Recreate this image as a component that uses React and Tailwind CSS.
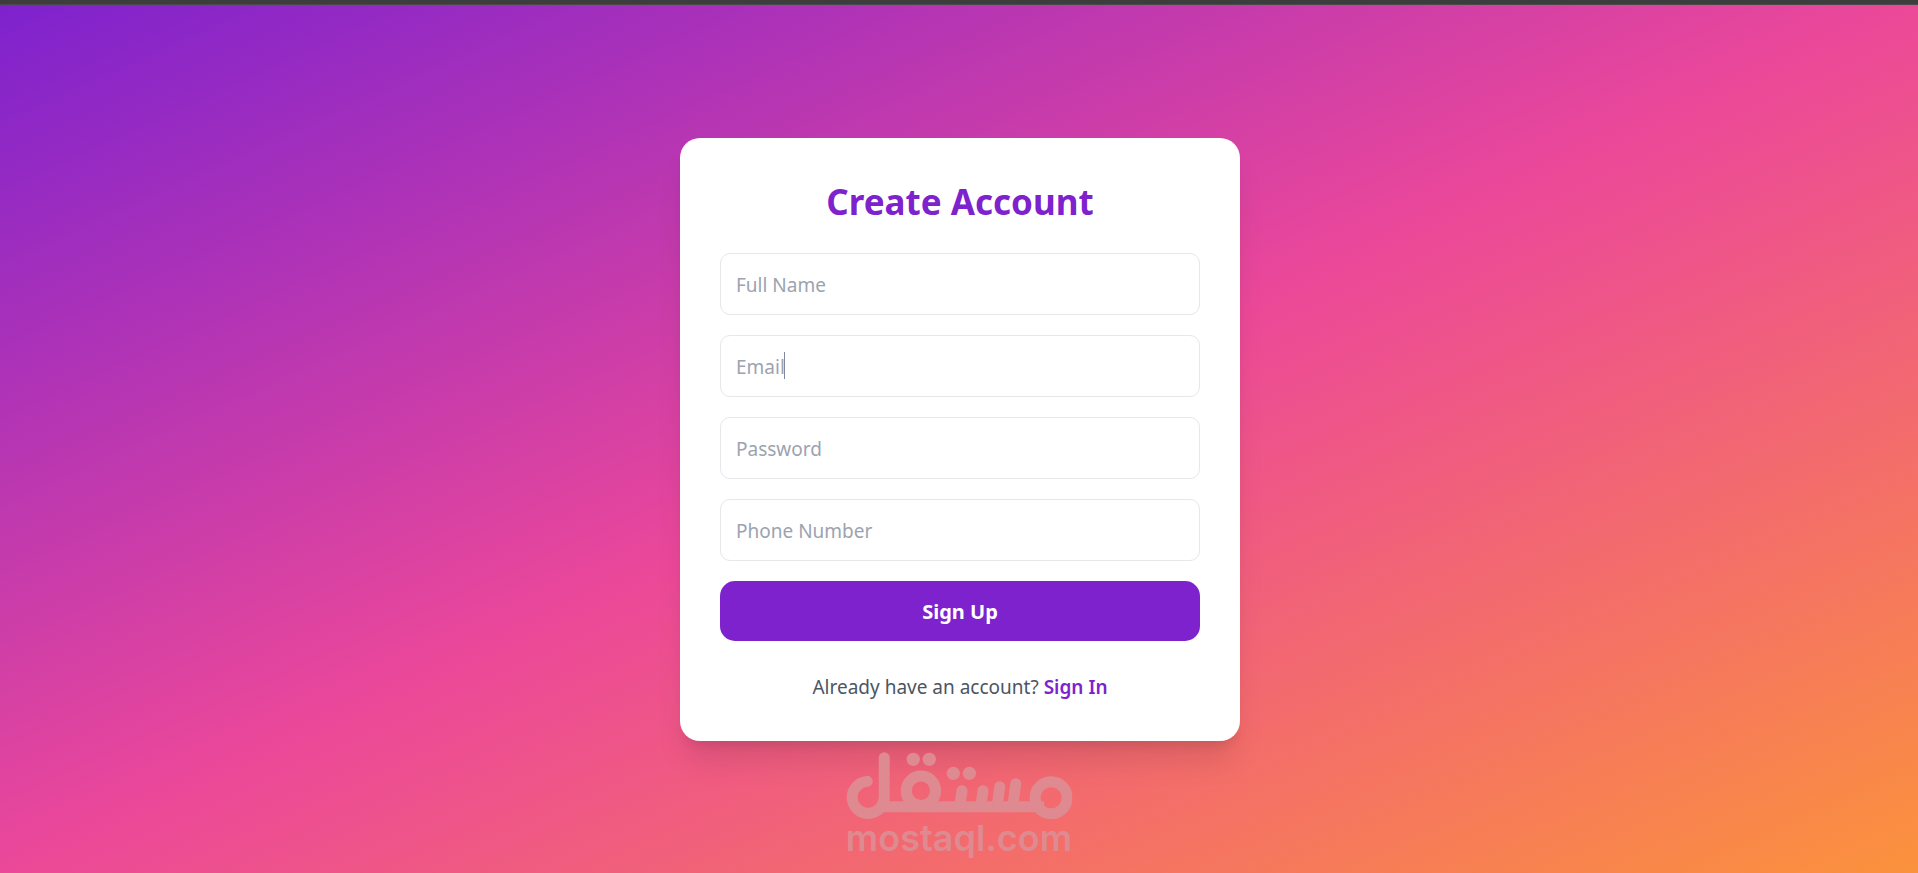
import { useState } from 'react';

const fields = [
  { name: 'name', type: 'text', label: 'Full Name' },
  { name: 'email', type: 'email', label: 'Email' },
  { name: 'password', type: 'password', label: 'Password' },
  { name: 'phone', type: 'tel', label: 'Phone Number' }
];

const Watermark = () => (
  <div className="pointer-events-none absolute bottom-4 left-1/2 flex -translate-x-1/2 flex-col items-center text-[#de8a90]">
    <svg viewBox="45 33 680 202" className="w-[227px]" fill="none" stroke="currentColor" strokeWidth="33" strokeLinecap="round">
      <path d="M110 121A48 48 0 1 0 161 170V50" />
      <path d="M140 197H640" strokeLinecap="butt" />
      <circle cx="271" cy="149" r="44" />
      <circle cx="661" cy="170" r="48" />
      <path d="M394 149L388 190M457 149L451 190M507 137L500 190M555 128L547 190" />
      <g fill="currentColor" stroke="none">
        <circle cx="248" cy="55" r="20" />
        <circle cx="296" cy="55" r="20" />
        <circle cx="368" cy="97" r="20" />
        <circle cx="416" cy="97" r="20" />
      </g>
    </svg>
    <span className="font-['Inter',sans-serif] text-[36px] leading-[38px] font-semibold">mostaql.com</span>
  </div>
);

const App = () => {
  const [form, setForm] = useState({ name: '', email: '', password: '', phone: '' });

  const handleChange = (e) => {
    setForm({ ...form, [e.target.name]: e.target.value });
  };

  return (
    <div className="flex min-h-screen flex-col bg-[#3d3d3d] font-['Noto_Sans',sans-serif]">
      <div className="h-[5px] border-b border-[#4a4a4a]" />
      <main className="relative flex flex-1 items-center justify-center bg-linear-to-br/srgb from-[#7e22ce] via-[#ec4899] to-[#fb923c] pt-px pl-0.5">
        {/* Card */}
        <div className="w-full max-w-[560px] rounded-[20px] bg-white p-10 shadow-[0_25px_31px_-6px_rgba(0,0,0,0.1),0_10px_12px_-7px_rgba(0,0,0,0.1)]">
          <h1 className="mb-[27px] text-center text-[35px] leading-[48px] font-bold text-[#7e22ce]">Create Account</h1>

          <form className="space-y-5" onSubmit={(e) => e.preventDefault()}>
            {fields.map((field) => (
              <div key={field.name} className="relative">
                <input
                  name={field.name}
                  type={field.type}
                  aria-label={field.label}
                  placeholder={field.label}
                  value={form[field.name]}
                  onChange={handleChange}
                  className="block w-full rounded-[10px] border border-[#e5e7eb] px-[15px] pt-4 pb-3.5 text-[19px] leading-[30px] placeholder:text-[#9ca3af] focus:outline-none"
                />
                {field.name === 'email' && <span className="absolute top-[17px] left-16 h-[27px] w-px bg-[#8088a0]" />}
              </div>
            ))}
            <button type="submit" className="block w-full rounded-[15px] bg-[#7e22ce] pt-4 pb-3.5 text-[20px] leading-[30px] font-bold text-white hover:bg-[#6b21a8]">
              Sign Up
            </button>
          </form>

          <p className="mt-8 text-center text-[19px] leading-7 text-[#4b5563]">
            Already have an account?{' '}
            <a href="#signin" className="font-semibold text-[#7e22ce] hover:underline">Sign In</a>
          </p>
        </div>
        <Watermark />
      </main>
    </div>
  );
};

export default App;
